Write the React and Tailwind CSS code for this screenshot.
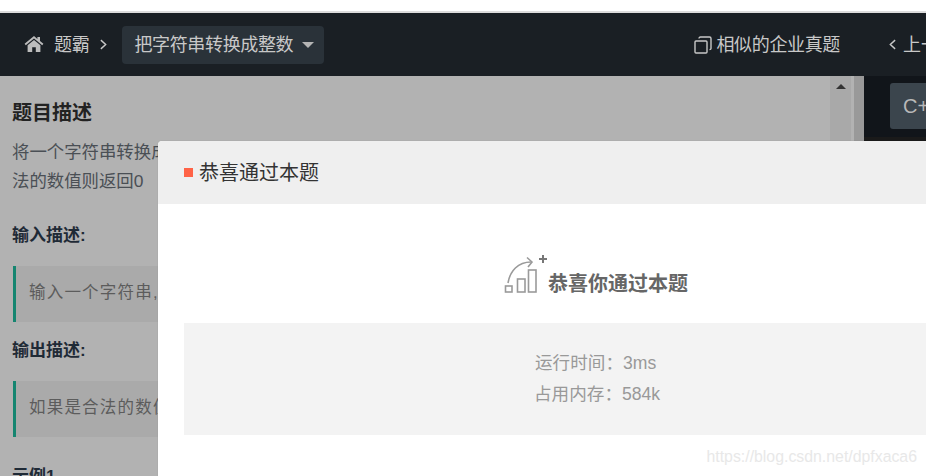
import React from "react";

function Quote({ children }) {
  return (
    <div className="h-[56px] border-l-[3px] border-[#158570] bg-[#aaaaaa] pl-[13px] pb-[4px] flex items-center text-[#5c5c5c] text-[16.5px] tracking-[1.2px] whitespace-nowrap overflow-hidden">
      {children}
    </div>
  );
}

function Label({ children, className }) {
  return <div className={"font-bold text-[17px] leading-[24px] text-[#1f2a36] " + className}>{children}</div>;
}

export default function App() {
  return (
    <div className="relative w-[926px] h-[476px] overflow-hidden bg-white flex flex-col font-['Liberation_Sans','Noto_Sans_CJK_SC',sans-serif]">
      <div className="h-[11px] shrink-0 bg-white" />
      <div className="h-[2px] shrink-0 bg-[#dcdcdc]" />
      <header className="h-[63px] shrink-0 bg-[#1a1f24] flex items-center text-[#c8c8c8] whitespace-nowrap">
        <svg viewBox="0 0 20 18" className="ml-[24px] w-[20px] h-[18px] -mt-[2px]" fill="#bcbcbc">
          <path d="M10 1 L0.6 8.8 L1.8 10.2 L10 3.4 L18.2 10.2 L19.4 8.8 L16 6 V2 H13.4 V3.9 Z" />
          <path d="M10 5 L3.6 10.2 V17 H8.2 V12.2 H11.8 V17 H16.4 V10.2 Z" />
        </svg>
        <span className="ml-[10px] mt-[1px] text-[18px] tracking-[-0.3px]">题霸</span>
        <svg viewBox="0 0 8 12" className="ml-[11px] w-[7px] h-[11px]" fill="none" stroke="#c8c8c8" strokeWidth="1.6">
          <path d="M1 1 L6.5 6 L1 11" />
        </svg>
        <div className="ml-[15px] h-[38px] w-[202px] rounded-[4px] bg-[#2a3239] flex items-center pl-[12px]">
          <span className="mt-[1px] text-[18px] tracking-[-0.35px]">把字符串转换成整数</span>
          <span className="ml-[9px] mt-[1px] w-0 h-0 border-x-[6px] border-x-transparent border-t-[6px] border-t-[#b4b4b4]" />
        </div>
        <div className="ml-auto flex items-center">
          <svg viewBox="0 0 18 18" className="w-[18px] h-[18px]" fill="none" stroke="#c8c8c8" strokeWidth="1.4">
            <rect x="1" y="5" width="12" height="12" rx="1" />
            <path d="M5 2.5 Q5 1 6.5 1 H15.5 Q17 1 17 2.5 V12.5 Q17 13.6 15.5 13.6" />
          </svg>
          <span className="ml-[4px] mt-[1px] text-[18px] tracking-[-0.35px]">相似的企业真题</span>
          <svg viewBox="0 0 8 12" className="ml-[49px] w-[7px] h-[11px]" fill="none" stroke="#c8c8c8" strokeWidth="1.6">
            <path d="M7 1 L1.5 6 L7 11" />
          </svg>
          <span className="ml-[7px] mt-[1px] w-[23px] text-[18px] overflow-hidden">上一题</span>
        </div>
      </header>
      <main className="flex-1 flex min-h-0">
        <section className="w-[830px] shrink-0 bg-[#b2b2b2] pl-[12px] pr-[13px] pt-[23px] overflow-hidden">
          <div className="font-bold text-[20px] leading-[28px] text-[#222222]">题目描述</div>
          <p className="mt-[11px] text-[17.4px] leading-[29px] text-[#4a4f55]">
            将一个字符串转换成一个整数，要求不能使用字符串转换整数的库函数。数值为0或者字符串不是
            <br />
            法的数值则返回0
          </p>
          <Label className="mt-[28px]">输入描述:</Label>
          <div className="mt-[18px] ml-[1px]"><Quote>输入一个字符串,包括数字字母符号,可以为空</Quote></div>
          <Label className="mt-[17px]">输出描述:</Label>
          <div className="mt-[18px] ml-[1px]"><Quote>如果是合法的数值表达则返回该数字，否则返回0</Quote></div>
          <Label className="mt-[28px]">示例1</Label>
        </section>
        <div className="w-[21px] shrink-0 bg-[#a9a9a9] flex justify-center pt-[8px]">
          <span className="w-0 h-0 border-x-[5px] border-x-transparent border-b-[5px] border-b-[#333333]" />
        </div>
        <div className="w-[3px] shrink-0 bg-[#b2b2b2]" />
        <div className="w-[10px] shrink-0 bg-[#999999]" />
        <aside className="flex-1 bg-[#11151a] pt-[7px]">
          <div className="ml-[26px] h-[46px] w-[60px] rounded-[3px] bg-[#3b454d] text-[#b8b8b8] text-[20px] flex items-center pl-[13px]">C++</div>
          <div className="mt-[8px] h-[20px] bg-[#1a1a1a] pl-[24px] text-[14px] leading-[20px] text-[#8a8a8a] whitespace-nowrap">Your</div>
        </aside>
      </main>
      <div className="absolute left-[158px] top-[141px] w-[900px] h-[400px] bg-white rounded-tl-[4px] shadow-[0_0_1px_rgba(0,0,0,0.25)]">
        <div className="h-[63px] bg-[#efefef] flex items-center pl-[26px] rounded-tl-[4px]">
          <span className="w-[9px] h-[9px] bg-[#ff6347]" />
          <span className="ml-[6px] text-[20px] text-[#333333]">恭喜通过本题</span>
        </div>
        <div className="mt-[47px] ml-[345px] h-[46px] flex items-end">
          <svg viewBox="0 0 46 42" className="w-[46px] h-[42px] mb-[4px]" fill="none" stroke="#9a9a9a" strokeWidth="1.6">
            <rect x="2.5" y="35" width="6.5" height="6" />
            <rect x="14.5" y="28" width="7.5" height="13" />
            <rect x="25.5" y="19" width="7.5" height="22" />
            <path d="M5 32 C7 20 15 11 28 11" />
            <path d="M24 6.5 L29 11 L25 16" />
            <path d="M36 8 H44 M40 4 V12" strokeWidth="2" stroke="#777777" />
          </svg>
          <span className="ml-[-1px] mb-[-2px] font-bold text-[20px] text-[#666666] whitespace-nowrap">恭喜你通过本题</span>
        </div>
        <div className="ml-[26px] mt-[26px] w-[800px] h-[112px] bg-[#f3f3f3] pt-[25px] text-[17.6px] leading-[31px] text-[#999999]">
          <div className="ml-[351px] whitespace-nowrap">运行时间：3ms</div>
          <div className="ml-[350px] whitespace-nowrap">占用内存：584k</div>
        </div>
      </div>
      <div className="absolute right-[9px] bottom-[7px] text-[15.85px] text-[#e8e8e8]">https://blog.csdn.net/dpfxaca6</div>
    </div>
  );
}
